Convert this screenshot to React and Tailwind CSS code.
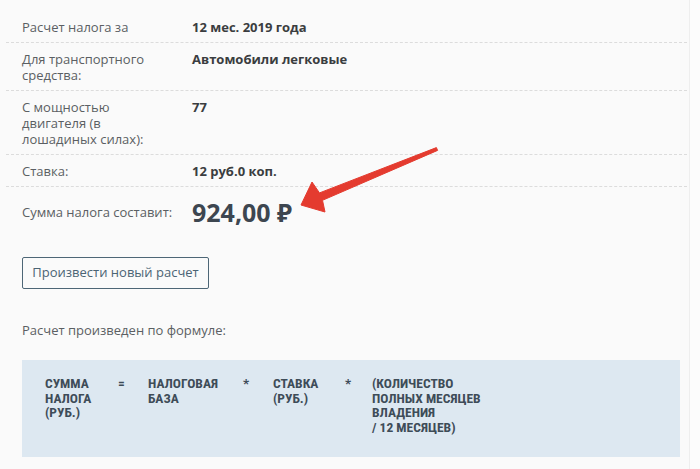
import React from "react";

const rows = [
  { label: ["Расчет налога за"], value: "12 мес. 2019 года" },
  { label: ["Для транспортного", "средства:"], value: "Автомобили легковые" },
  { label: ["С мощностью", "двигателя (в", "лошадиных силах):"], value: "77" },
  { label: ["Ставка:"], value: "12 руб.0 коп." },
];

export default function App() {
  return (
    <div
      className="relative w-[700px] h-[469px] overflow-hidden bg-[#fcfcfc]"
      style={{ fontFamily: '"Open Sans", "Noto Sans", sans-serif' }}
    >
      <div className="w-[690px] h-full bg-[#fafafa] border-r border-[#eeeeee] pt-[11px]">
        <div className="ml-[6px] mr-[2px]">
          {rows.map((r, i) => (
            <div
              key={i}
              className="flex py-[7.5px] border-b border-dashed border-[#dcdcdc]"
            >
              <div className="w-[186px] shrink-0 pl-[16px] text-[13px] leading-[16px] text-[#5b5f63]">
                {r.label.map((l, j) => (
                  <div key={j}>{l}</div>
                ))}
              </div>
              <div className="text-[13px] leading-[16px] font-bold text-[#3a3d40]">
                {r.value}
              </div>
            </div>
          ))}
          <div className="flex items-center pt-[9px]">
            <div className="w-[186px] shrink-0 pl-[16px] text-[13px] leading-[16px] text-[#5b5f63]">
              Сумма налога составит:
            </div>
            <div className="text-[25px] leading-[32px] font-bold text-[#3d4650]">
              924,00 ₽
            </div>
          </div>
        </div>
        <div className="pl-[22px] pt-[29px]">
          <div className="w-[187px] h-[32px] border border-[#4d6676] rounded-[2px] flex items-center justify-center text-[13px] text-[#4b6474]">
            Произвести новый расчет
          </div>
        </div>
        <div className="pl-[22px] pt-[33px] text-[13px] leading-[16px] text-[#5b5f63]">
          Расчет произведен по формуле:
        </div>
        <div
          className="ml-[22px] mt-[22px] w-[658px] h-[97px] bg-[#dde8f1] pl-[23px] pt-[16px] flex text-[13.5px] leading-[14.5px] font-bold text-[#3e4c58]"
          style={{ fontFamily: '"Liberation Sans Narrow", "Roboto Condensed", "Roboto", sans-serif' }}
        >
          <div className="w-[73px]">
            <div>СУММА</div>
            <div>НАЛОГА</div>
            <div>(РУБ.)</div>
          </div>
          <div className="w-[30px]">=</div>
          <div className="w-[95px]">
            <div>НАЛОГОВАЯ</div>
            <div>БАЗА</div>
          </div>
          <div className="w-[30px]">*</div>
          <div className="w-[72px]">
            <div>СТАВКА</div>
            <div>(РУБ.)</div>
          </div>
          <div className="w-[27px]">*</div>
          <div>
            <div>(КОЛИЧЕСТВО</div>
            <div>ПОЛНЫХ МЕСЯЦЕВ</div>
            <div>ВЛАДЕНИЯ</div>
            <div>/ 12 МЕСЯЦЕВ)</div>
          </div>
        </div>
      </div>
      <svg
        className="absolute left-0 top-0 pointer-events-none"
        width="700"
        height="469"
        viewBox="0 0 700 469"
      >
        <polygon
          points="301,205 312,182 319.5,192.9 436.4,147.6 437.6,150.4 322.5,200.3 325,212"
          fill="#e43b2f"
          stroke="#e43b2f"
          strokeWidth="1"
          strokeLinejoin="round"
        />
      </svg>
    </div>
  );
}
